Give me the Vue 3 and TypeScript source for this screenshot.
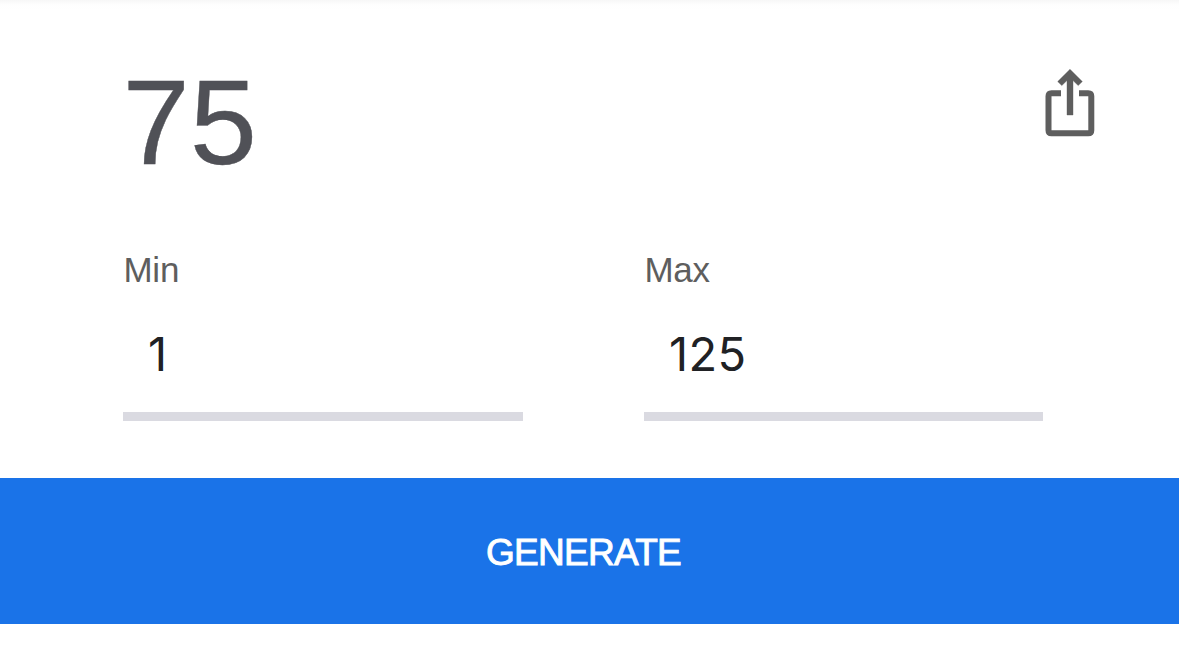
<script setup lang="ts">
import { ref } from 'vue'

const min = ref('1')
const max = ref('125')
const result = ref(75)

function generate(): void {
  const low = Number(min.value)
  const high = Number(max.value)
  result.value = low + Math.floor(Math.random() * (high - low + 1))
}
</script>

<template>
  <main class="card">
    <header class="top">
      <output class="result">{{ result }}</output>
      <button class="share" aria-label="Share">
        <svg width="50" height="68" viewBox="0 0 50 68">
          <path d="M16 24.300H6.500Q3.500 24.300 3.500 27.300V61.200Q3.500 64.200 6.500 64.200H43.300Q46.300 64.200 46.300 61.200V27.300Q46.300 24.300 43.300 24.300H34" fill="none" stroke="#5e5e5e" stroke-width="6" />
          <path d="M25 .3L37.300 12.600L33.200 16.600L28 11.500V46H22V11.500L16.800 16.600L12.700 12.600Z" fill="#5e5e5e" stroke="#5e5e5e" stroke-width=".4" />
        </svg>
      </button>
    </header>
    <div class="fields">
      <label class="field"><span class="label">Min</span><input v-model="min" class="input" inputmode="numeric" /></label>
      <label class="field"><span class="label">Max</span><input v-model="max" class="input" inputmode="numeric" /></label>
    </div>
    <button class="generate" @click="generate"><span>GENERATE</span></button>
  </main>
</template>

<style>
body { margin: 0; background: #fff; }
</style>

<style scoped>
.card { box-sizing: border-box; height: 666px; overflow: hidden; font-family: "Liberation Sans", Arial, sans-serif; background: linear-gradient(#f7f7f7, #fefefe 5px, #fff 10px); }
button { border: 0; padding: 0; background: none; font-family: inherit; }
.top { display: flex; justify-content: space-between; align-items: flex-start; height: 255px; box-sizing: border-box; padding: 53px 84px 0 122.5px; }
.result { font-size: 121px; line-height: 138px; color: #505157; -webkit-text-stroke: .4px #505157; }
.share { display: block; width: 50px; height: 68px; margin-top: 16px; }
.share svg { display: block; }
.fields { display: grid; grid-template-columns: 400px 399px; column-gap: 121px; padding-left: 123.4px; height: 223px; }
.field { display: block; }
.label { display: block; height: 65px; line-height: 30px; font-size: 35px; letter-spacing: -.2px; color: #5e5e5e; }
.input { display: block; box-sizing: border-box; width: 100%; height: 101px; padding: 0 24px 26px 24.600px; border: 0; border-bottom: 9px solid #dadae1; border-radius: 0; outline: 0; background: transparent; font-family: Inter, sans-serif; font-size: 47px; letter-spacing: .4px; color: #202124; }
.generate { display: flex; align-items: center; justify-content: center; box-sizing: border-box; width: 100%; height: 146px; padding: 3px 12px 0 0; background: #1a73e8; color: #fff; font-size: 37px; letter-spacing: -.7px; -webkit-text-stroke: .9px #fff; }
</style>
